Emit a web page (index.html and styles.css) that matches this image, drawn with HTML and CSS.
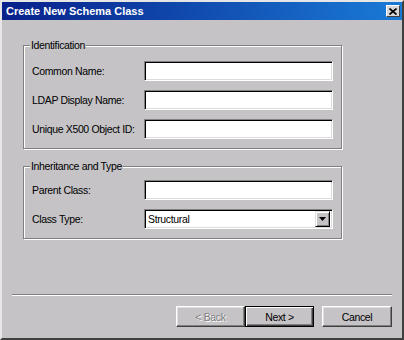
FILE: index.html
```html
<!DOCTYPE html>
<html lang="en">
<head>
    <meta charset="UTF-8">
    <title>Create New Schema Class</title>
    <link rel="stylesheet" href="styles.css">
</head>
<body>
    <div class="window">
        <div class="titlebar">
            <span class="title">Create New Schema Class</span>
            <span class="close">
                <svg width="8" height="7" viewBox="0 0 8 7"><path d="M0.5 0.5 L7.5 6.5 M7.5 0.5 L0.5 6.5" stroke="#000" stroke-width="1.6" fill="none"/></svg>
            </span>
        </div>
        <div class="content">
            <fieldset class="group group-ident">
                <legend>Identification</legend>
                <div class="row"><label>Common Name:</label><input class="textbox" type="text"></div>
                <div class="row"><label>LDAP Display Name:</label><input class="textbox" type="text"></div>
                <div class="row"><label>Unique X500 Object ID:</label><input class="textbox" type="text"></div>
            </fieldset>
            <fieldset class="group group-type">
                <legend>Inheritance and Type</legend>
                <div class="row"><label>Parent Class:</label><input class="textbox" type="text"></div>
                <div class="row"><label>Class Type:</label>
                    <div class="combo">
                        <span class="combo-text">Structural</span>
                        <span class="combo-btn">
                            <svg width="7" height="4" viewBox="0 0 7 4"><path d="M0 0 H7 L3.5 4 Z" fill="#000"/></svg>
                        </span>
                    </div>
                </div>
            </fieldset>
        </div>
        <div class="separator"></div>
        <div class="footer">
            <button class="btn" disabled>&lt; Back</button>
            <button class="btn btn-default">Next &gt;</button>
            <button class="btn btn-cancel">Cancel</button>
        </div>
    </div>
</body>
</html>
```

FILE: styles.css
```css
body {
    margin: 0;
    background-color: #c5c3c6;
    font-family: "Liberation Sans", Arial, sans-serif;
    font-size: 10.5px;
    letter-spacing: -0.35px;
    color: #000;
}
.window {
    box-sizing: border-box;
    width: 404px;
    height: 340px;
    display: flex;
    flex-direction: column;
    background-color: #c5c3c6;
    border: 2px solid;
    border-color: #e6e6e6 #404040 #404040 #e6e6e6;
}
.titlebar {
    height: 18px;
    display: flex;
    align-items: center;
    justify-content: space-between;
    padding: 0 2px 0 4px;
    background: linear-gradient(to right, #08208a, #1a7ad6);
    color: #fff;
    font-size: 11px;
    font-weight: bold;
    letter-spacing: 0;
}
.close {
    box-sizing: border-box;
    width: 14px;
    height: 12px;
    display: flex;
    align-items: center;
    justify-content: center;
    background-color: #d8d6d8;
    border: 1px solid;
    border-color: #fff #404040 #404040 #fff;
}
.content {
    flex: 1;
    padding: 19px 0 0 21px;
}
.group {
    box-sizing: border-box;
    width: 319px;
    margin: 0;
    padding: 10px 8px 9px;
    border: 1px solid #808080;
    box-shadow: inset 1px 1px 0 #fff, 1px 1px 0 #fff;
}
.group legend {
    padding: 0 1px;
    margin-left: -2px;
    line-height: 12px;
    background-color: #c5c3c6;
}
.group-type {
    margin-top: 11px;
    padding-top: 8px;
}
.row {
    display: flex;
    align-items: center;
    height: 20px;
}
.row + .row {
    margin-top: 9px;
}
.row label {
    width: 112px;
}
.textbox {
    box-sizing: border-box;
    width: 189px;
    height: 20px;
    margin: 0;
    padding: 0 3px;
    background: #fff;
    border: 1px solid;
    border-color: #808080 #fff #fff #808080;
    box-shadow: inset 1px 1px 0 #000, inset -1px -1px 0 #dcdcdc;
    outline: none;
}
.combo {
    box-sizing: border-box;
    width: 189px;
    height: 20px;
    display: flex;
    align-items: center;
    padding: 2px;
    background: #fff;
    border: 1px solid;
    border-color: #808080 #fff #fff #808080;
    box-shadow: inset 1px 1px 0 #000, inset -1px -1px 0 #dcdcdc;
}
.combo-text {
    flex: 1;
    padding-left: 1px;
}
.combo-btn {
    box-sizing: border-box;
    width: 15px;
    height: 16px;
    display: flex;
    align-items: center;
    justify-content: center;
    background-color: #c5c3c6;
    border: 1px solid;
    border-color: #dfdfdf #000 #000 #dfdfdf;
    box-shadow: inset 1px 1px 0 #fff, inset -1px -1px 0 #808080;
}
.separator {
    margin: 0 10px;
    border-top: 1px solid #808080;
    border-bottom: 1px solid #fff;
}
.footer {
    display: flex;
    justify-content: flex-end;
    padding: 10px 10px 11px;
}
.btn {
    box-sizing: border-box;
    width: 69px;
    height: 21px;
    margin: 0;
    padding: 0;
    font-family: "Liberation Sans", Arial, sans-serif;
    font-size: 10.5px;
    letter-spacing: -0.35px;
    color: #000;
    background-color: #c5c3c6;
    border: 1px solid;
    border-color: #fff #404040 #404040 #fff;
    box-shadow: inset -1px -1px 0 #808080, inset 1px 1px 0 #dfdfdf;
}
.btn:disabled {
    color: #808080;
    text-shadow: 1px 1px 0 #fff;
}
.btn-default {
    border: 1px solid #000;
    box-shadow: inset 1px 1px 0 #fff, inset -1px -1px 0 #404040, inset -2px -2px 0 #808080;
}
.btn-cancel {
    width: 70px;
    margin-left: 8px;
}
```
